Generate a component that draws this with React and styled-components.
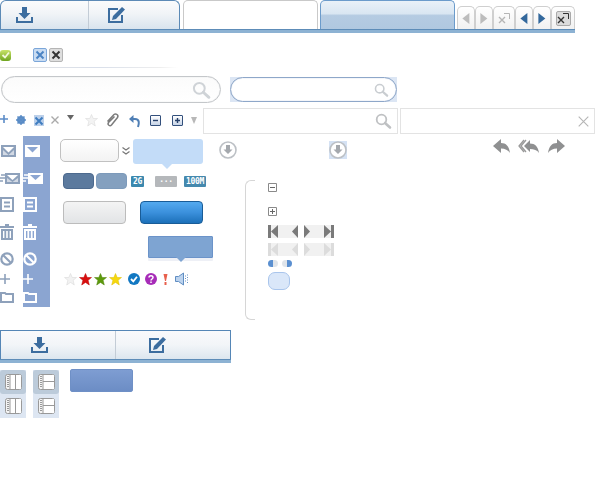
import React from "react";
import styled, { createGlobalStyle } from "styled-components";

const Global = createGlobalStyle`
  html, body { margin: 0; padding: 0; background: #fff; }
  body { font-family: "Liberation Sans", Arial, sans-serif; }
`;

const Page = styled.div`width: 600px; height: 500px; overflow: hidden; display: flex; flex-direction: column;`;
const Glyph = styled.svg`display: block; flex: none; overflow: visible; margin-left: ${p => p.$ml || 0}px; margin-top: ${p => p.$mt || 0}px;`;

const TabBar = styled.div`
  width: ${p => p.$w}px; height: 33px; display: flex; align-items: flex-start; flex: none; box-sizing: border-box;
  border-bottom: 3px solid #8db2d3; position: relative;
  box-shadow: inset 0 -1px 0 #5d8cb8;
`;
const IconTab = styled.div`
  width: 180px; height: 29px; box-sizing: border-box; display: flex; flex: none;
  border: 1px solid #5c8ab6; border-bottom: 0; border-radius: 6px 6px 0 0;
  background: linear-gradient(#fafbfc, #f1f4f7 45%, #d9e4ee);
`;
const PlainTab = styled.div`
  width: 135px; height: 29px; box-sizing: border-box; flex: none; margin-left: 3px;
  border: 1px solid #c9c9c9; border-bottom: 0; border-radius: 5px 5px 0 0; background: #fff;
`;
const ActiveTab = styled.div`
  width: 135px; height: 29px; box-sizing: border-box; flex: none; margin-left: 2px;
  border: 1px solid #6b9bcb; border-bottom: 0; border-radius: 5px 5px 0 0;
  background: linear-gradient(#e9f1f8, #d9e6f2 45%, #b5cbe2 52%, #b0c8e0 100%);
`;
const TabCell = styled.div`
  flex: ${p => p.$w ? `0 0 ${p.$w}px` : 1}; display: flex; align-items: center; box-sizing: border-box;
  padding-left: ${p => p.$pl}px; padding-bottom: 1px;
  border-right: ${p => p.$div ? "1px solid #c3ccd6" : 0};
`;
const NavGroup = styled.div`display: flex; margin-left: 2px; margin-top: 6px;`;
const NavBtn = styled.div`
  width: ${p => p.$w}px; height: 23px; box-sizing: border-box; display: flex; align-items: center; justify-content: center;
  border: 1px solid #cfcfcf; border-bottom: 0; border-radius: 5px 5px 0 0; background: linear-gradient(#fff, #f1f1f1);
`;
const BoxedClose = styled.div`width: 15px; height: 15px; background: #dcdcdc; border: 1px solid #aaa; box-sizing: border-box; border-radius: 2px; display: flex; align-items: center; justify-content: center;`;

const StatusRow = styled.div`display: flex; align-items: center; height: 15px; margin-top: 14px; flex: none;`;
const CloseChip = styled.div`
  width: 14px; height: 14px; box-sizing: border-box; border-radius: 2px; margin-left: ${p => p.$ml}px;
  display: flex; align-items: center; justify-content: center;
  background: ${p => p.$on ? "#c9dcf2" : "#dedede"}; border: 1px solid ${p => p.$on ? "#7ba6d9" : "#b5b5b5"};
`;
const FadeLine = styled.div`width: 178px; height: 1px; margin-top: 5px; flex: none; background: linear-gradient(90deg, #e2e2e2, #d9dfea 55%, #eee 90%, #fff);`;

const SearchRow = styled.div`display: flex; align-items: center; margin-top: 8px; height: 27px; flex: none;`;
const SearchPill = styled.div`
  width: 220px; height: 27px; margin-left: 1px; box-sizing: border-box; border: 1px solid #c4c7ca; border-radius: 14px;
  box-shadow: inset 0 0 1px #c4c7ca;
  display: flex; align-items: center; justify-content: flex-end; padding-right: 10px; background: linear-gradient(#fbfbfb, #fff);
`;
const SearchTile = styled.div`width: 167px; height: 25px; margin-left: 9px; background: #dce6f4;`;
const SearchInner = styled.div`
  width: 100%; height: 100%; box-sizing: border-box; border: 1px solid #8ea7c9; border-radius: 13px; background: #fff;
  box-shadow: inset 0 0 1px #8ea7c9;
  display: flex; align-items: center; justify-content: flex-end; padding-right: 8px;
`;

const ToolRow = styled.div`display: flex; margin-top: 5px; height: 26px; flex: none;`;
const ToolIcons = styled.div`display: flex; align-items: flex-start; width: 203px; flex: none; padding-top: 7px; box-sizing: border-box;`;
const FieldBox = styled.div`
  width: ${p => p.$w}px; height: 26px; box-sizing: border-box; border: 1px solid #e3e3e3; margin-left: ${p => p.$ml || 0}px;
  display: flex; align-items: center; justify-content: flex-end; padding-right: ${p => p.$pr}px;
`;
const XTile = styled.div`width: 10px; height: 11px; background: #bcd0ea; margin-left: 8px; display: flex; align-items: center; justify-content: center;`;
const MiniBox = styled.div`
  width: 11px; height: 11px; box-sizing: border-box; margin-left: ${p => p.$ml}px; border: 1px solid #33507c; border-radius: 1px;
  background: linear-gradient(#fff, #c6d3e6); display: flex; align-items: center; justify-content: center;
`;

const Main = styled.div`display: flex; margin-top: 2px; height: 184px; flex: none;`;
const GlyphColumns = styled.div`display: flex; width: 50px; height: 171px; flex: none;`;
const GlyphCol = styled.div`width: ${p => p.$w}px; flex: none; background: ${p => p.$bg || "transparent"}; display: flex; flex-direction: column;`;
const MiddleArea = styled.div`flex: 1; display: flex; flex-direction: column; padding-left: 10px;`;
const TopStrip = styled.div`display: flex; align-items: flex-start; height: 37px; box-sizing: border-box; padding-top: 3px; flex: none;`;
const WhiteField = styled.div`
  width: 59px; height: 23px; box-sizing: border-box; border: 1px solid #c1c1c1; border-radius: 5px; background: linear-gradient(#fff, #f3f3f3);
`;
const Bubble = styled.div`
  width: ${p => p.$w}px; height: ${p => p.$h}px; box-sizing: border-box; margin-left: ${p => p.$ml}px; position: relative; flex: none;
  background: ${p => p.$bg}; border: ${p => p.$line ? `1px solid ${p.$line}` : 0}; border-radius: ${p => p.$r}px;
  box-shadow: ${p => p.$under ? `0 3px 0 ${p.$under}` : "none"};
  &::after {
    content: ""; position: absolute; left: ${p => p.$tip}px; bottom: -5px;
    border: 5px solid transparent; border-bottom: 0; border-top-color: ${p => p.$bg};
  }
`;
const HalfTile = styled.div`width: 18px; height: 18px; margin-left: ${p => p.$ml}px; margin-top: 2px; background: ${p => p.$bg || "transparent"}; flex: none;`;
const Lower = styled.div`display: flex; flex: 1;`;
const WidgetsCol = styled.div`width: 185px; flex: none; display: flex; flex-direction: column; padding-left: 3px; box-sizing: border-box;`;
const MiniBtnRow = styled.div`display: flex; align-items: center; height: 16px; flex: none;`;
const SlateBtn = styled.div`
  width: 31px; height: 16px; box-sizing: border-box; margin-left: ${p => p.$ml || 0}px; border-radius: 4px;
  background: ${p => p.$dark ? "#5c7a9e" : "#84a0bf"}; border: 1px solid ${p => p.$dark ? "#4d6a8e" : "#7d9aba"};
`;
const Badge = styled.div`
  width: ${p => p.$w}px; height: 11px; margin-left: ${p => p.$ml}px; border-radius: 1px; background: ${p => p.$bg};
  color: #fff; font: bold 8px/11px "DejaVu Sans Mono", monospace; text-align: center; overflow: hidden; letter-spacing: -0.3px; flex: none;
`;
const LargeRow = styled.div`display: flex; margin-top: 12px; height: 23px; flex: none;`;
const GrayBtn = styled.div`width: 63px; height: 23px; box-sizing: border-box; border: 1px solid #bcbcbc; border-radius: 4px; background: linear-gradient(#f4f4f4, #e2e4e6);`;
const BlueBtn = styled.div`width: 63px; height: 23px; box-sizing: border-box; margin-left: 14px; border: 1px solid #195c97; border-radius: 4px; background: linear-gradient(#54aaef, #3b90dc 50%, #1c70b9);`;
const BubbleRow = styled.div`display: flex; margin-top: 12px; height: 26px; flex: none;`;
const StarRow = styled.div`display: flex; align-items: center; height: 16px; margin-top: 9px; flex: none; padding-left: 1px;`;

const Bracket = styled.div`
  width: 10px; height: 140px; box-sizing: border-box; margin-top: 7px; flex: none;
  border: 1px solid #d6d6d6; border-right: 0; border-radius: 6px 0 0 6px;
`;
const TreeCol = styled.div`display: flex; flex-direction: column; margin-left: 13px; padding-top: 10px;`;
const PagerRow = styled.div`display: flex; gap: 6px; margin-top: ${p => p.$mt}px;`;
const Pager = styled.div`width: 30px; height: 13px; background: #f1f1f1; display: flex; align-items: center; justify-content: space-between;`;
const DotRow = styled.div`display: flex; gap: 4px; margin-top: 4px;`;
const Dot = styled.div`width: 10px; height: 7px; border-radius: 4px; background: linear-gradient(${p => p.$flip ? "270deg" : "90deg"}, #5a8fd0 50%, #dfe4ea 50%);`;
const Blob = styled.div`width: 22px; height: 18px; margin-top: 5px; box-sizing: border-box; border: 1px solid #a9c5ec; border-radius: 7px; background: #dae7f9;`;

const WideBar = styled(TabBar)`margin-top: 10px;`;
const FlatTabs = styled.div`
  width: 231px; height: 29px; box-sizing: border-box; display: flex; border: 1px solid #5586b6; border-bottom: 0;
  background: linear-gradient(#f9fafc, #f2f5f8 50%, #dce6ef);
`;
const Bottom = styled.div`display: flex; align-items: flex-start; margin-top: 7px;`;
const LayoutTile = styled.div`width: 26px; height: 48px; margin-left: ${p => p.$ml || 0}px; background: #dde6f2; flex: none; display: flex; flex-direction: column;`;
const LayoutCell = styled.div`
  height: 24px; display: flex; align-items: center; justify-content: center; border-radius: 3px;
  background: ${p => p.$on ? "#bccbda" : "transparent"};
`;
const FlatBlue = styled.div`width: 63px; height: 23px; box-sizing: border-box; margin-left: 11px; margin-top: -1px; border: 1px solid #6f90c6; border-radius: 2px; background: linear-gradient(#7e9dd2, #6c8dc5);`;

const Download = ({ c = "#3c6d9f" }) => (
  <Glyph width="17" height="16" viewBox="0 0 17 16">
    <path fill={c} d="M6 0h5v6h3.500L8.500 12 2.500 6H6zM0 10h2v4h13v-4h2v6H0z" />
  </Glyph>
);
const Edit = () => (
  <Glyph width="17" height="16" viewBox="0 0 17 16">
    <path fill="none" stroke="#3c6d9f" strokeWidth="2" d="M10 2H1v13h13V8" />
    <path fill="#3c6d9f" d="M14 0l3 2.500L8 12l-4 1 1-4z" />
  </Glyph>
);
const Lens = ({ s = 16, c = "#c9cdd1", ml }) => (
  <Glyph $ml={ml} width={s} height={s} viewBox="0 0 16 16">
    <circle cx="6.500" cy="6.500" r="4.800" fill="none" stroke={c} strokeWidth="1.800" />
    <path d="M10 10l5 4.500" stroke={c} strokeWidth="2.600" strokeLinecap="round" />
  </Glyph>
);
const Cross = ({ s = 8, c = "#2f6cb0", w = 2, ml, mt }) => (
  <Glyph $ml={ml} $mt={mt} width={s} height={s} viewBox="0 0 8 8">
    <path d="M0.500 0.500l7 7M7.500 0.500l-7 7" stroke={c} strokeWidth={w} />
  </Glyph>
);
const Tri = ({ d, c, s = 11 }) => (
  <Glyph width={s * 0.7} height={s} viewBox="0 0 7 11">
    <path fill={c} d={d === "l" ? "M7 0v11L0 5.500z" : "M0 0v11l7-5.500z"} />
  </Glyph>
);
const CloseSq = ({ c }) => (
  <Glyph width="13" height="13" viewBox="0 0 13 13">
    <path d="M1 5l6 6M7 5l-6 6" stroke={c} strokeWidth="1.400" />
    <path d="M6 1.500h5.500V7" fill="none" stroke={c} strokeWidth="1" />
  </Glyph>
);
const Star = ({ c, line, s = 13, ml, mt }) => (
  <Glyph $ml={ml} $mt={mt} width={s} height={s} viewBox="0 0 13 13">
    <path fill={c} stroke={line} strokeWidth="0.500" d="M6.500 0.500l1.700 4h4.300l-3.400 2.800 1.200 4.700-3.800-2.600-3.800 2.600 1.200-4.700L0.500 4.500h4.300z" />
  </Glyph>
);
const Plus = ({ s = 10, c, w = 2, ml, mt }) => (
  <Glyph $ml={ml} $mt={mt} width={s} height={s} viewBox="0 0 10 10">
    <path d="M5 0v10M0 5h10" stroke={c} strokeWidth={w} />
  </Glyph>
);
const Mail = ({ c, cut, soft = 0, ml, mt }) => (
  <Glyph $ml={ml} $mt={mt} width="15" height="12" viewBox="0 0 15 12">
    <path fill={c} d="M0 0h15v12H0z" />
    <path fill={cut} d="M2 2h11L7.500 7.500z" />
    <path fill={cut} opacity={soft} d="M2 5l5.500 5L13 5v5H2z" />
  </Glyph>
);
const SendMail = ({ c, cut, soft = 0, w, ml, mt }) => (
  <Glyph $ml={ml} $mt={mt} width={w} height="11" viewBox={`${21 - w} 0 ${w} 11`}>
    <path d="M2 2h4M1 5h5M0 8h4" stroke={c} strokeWidth="1.600" />
    <path fill={c} d="M6 0h15v11H6z" />
    <path fill={cut} d="M8 2h11l-5.500 5z" />
    <path fill={cut} opacity={soft} d="M8 5l5.500 4L19 5v4H8z" />
  </Glyph>
);
const Doc = ({ c, ml, mt }) => (
  <Glyph $ml={ml} $mt={mt} width="14" height="15" viewBox="0 0 14 15">
    <path fill="none" stroke={c} strokeWidth="2" d="M1 1h12v13H1z" />
    <path stroke={c} strokeWidth="1.800" d="M4 5.500h6M4 9.500h6" />
  </Glyph>
);
const Trash = ({ c, ml, mt }) => (
  <Glyph $ml={ml} $mt={mt} width="14" height="16" viewBox="0 0 14 16">
    <path fill={c} d="M0 2h5V0h4v2h5v2H0z" />
    <path fill={c} d="M1 5h12v11H1zM3 7v7h1.400V7zm3.200 0v7h1.600V7zm3.400 0v7H11V7z" fillRule="evenodd" />
  </Glyph>
);
const Ban = ({ c, ml, mt }) => (
  <Glyph $ml={ml} $mt={mt} width="14" height="14" viewBox="0 0 14 14">
    <circle cx="7" cy="7" r="5.700" fill="none" stroke={c} strokeWidth="2.200" />
    <path d="M3 3l8 8" stroke={c} strokeWidth="2.200" />
  </Glyph>
);
const Folder = ({ c, ml, mt }) => (
  <Glyph $ml={ml} $mt={mt} width="14" height="12" viewBox="0 0 14 12">
    <path fill="none" stroke={c} strokeWidth="2" d="M1 3V2h4l1 1h7v8H1z" />
  </Glyph>
);
const CircleArrow = () => (
  <Glyph width="18" height="18" viewBox="0 0 18 18">
    <circle cx="9" cy="9" r="8" fill="#fff" stroke="#bcc0c5" strokeWidth="1.600" />
    <path fill="#a4a8ad" d="M7 4h4v4.500h2.500L9 13 4.500 8.500H7z" />
  </Glyph>
);
const Reply = ({ ml, flip }) => (
  <Glyph $ml={ml} width="17" height="15" viewBox="0 0 17 15" style={flip ? { transform: "scaleX(-1)" } : undefined}>
    <path fill="#8f9091" d="M8 0v4c5 0 8 3 9 10-2-3-5-4.500-9-4.500V14L0 7z" />
  </Glyph>
);
const ReplyAll = ({ ml }) => (
  <Glyph $ml={ml} width="21" height="15" viewBox="0 0 21 15">
    <path fill="none" stroke="#9a9a9a" strokeWidth="1.300" d="M6 1L1 7l5 6M8 1L3 7l5 6" />
    <path fill="#8f9091" d="M12 1v3.500c5 0 8 3 9 9.500-2-3-5-4-9-4V13L6 7z" />
  </Glyph>
);
const Chevrons = () => (
  <Glyph $ml={3} $mt={8} width="8" height="8" viewBox="0 0 8 8">
    <path d="M0.500 0.500L4 3l3.500-2.500M0.500 4.500L4 7l3.500-2.500" fill="none" stroke="#777" strokeWidth="1.200" />
  </Glyph>
);
const SmallBox = ({ plus, mt }) => (
  <Glyph $mt={mt} width="9" height="9" viewBox="0 0 9 9">
    <path fill="none" stroke="#8a8a8a" d="M.5.5h8v8h-8z" />
    <path stroke="#666" d={plus ? "M2 4.500h5M4.500 2v5" : "M2 4.500h5"} />
  </Glyph>
);
const PagerEnd = ({ right, c }) => (
  <Glyph width="10" height="13" viewBox="0 0 10 13">
    <g transform={right ? "translate(10,0) scale(-1,1)" : undefined}>
      <path fill={c} d="M0 0h3v13H0zM10 0v13L3 6.500z" />
    </g>
  </Glyph>
);
const PagerStep = ({ right, c }) => (
  <Glyph width="6" height="13" viewBox="0 0 6 13">
    <path fill={c} d={right ? "M0 0v13l6-6.500z" : "M6 0v13L0 6.500z"} />
  </Glyph>
);
const PagerPair = ({ c, mt }) => (
  <PagerRow $mt={mt}>
    <Pager><PagerEnd c={c} /><PagerStep c={c} /></Pager>
    <Pager><PagerStep right c={c} /><PagerEnd right c={c} /></Pager>
  </PagerRow>
);
const LayoutIcon = ({ alt }) => (
  <Glyph width="17" height="16" viewBox="0 0 17 16">
    <rect x=".5" y=".5" width="16" height="15" rx="2" fill="#f4f4f4" stroke="#999" />
    <path fill="#fff" d="M5 1h11v14H5z" />
    <path stroke="#999" strokeDasharray="1 1" strokeWidth="2" d="M3 2v12" />
    <path stroke="#999" d={alt ? "M5 1v14M5 7.500h11" : "M5 1v14M10.500 1v14"} />
  </Glyph>
);
const GearIcon = () => (
  <Glyph $ml={8} width="10" height="10" viewBox="0 0 10 10">
    <circle cx="5" cy="5" r="3" fill="none" stroke="#5a8cc6" strokeWidth="2" />
    <path stroke="#5a8cc6" strokeWidth="1.400" d="M5 0v10M0 5h10M1.500 1.500l7 7M8.500 1.500l-7 7" />
  </Glyph>
);

const IconBar = ({ w1, pl1, pl2 }) => (
  <>
    <TabCell $w={w1} $div $pl={pl1}><Download /></TabCell>
    <TabCell $pl={pl2}><Edit /></TabCell>
  </>
);

export default function App() {
  const slate = "#8ea1bb";
  return (
    <Page>
      <Global />
      <TabBar $w={575}>
        <IconTab><IconBar w1={88} pl1={15} pl2={19} /></IconTab>
        <PlainTab />
        <ActiveTab />
        <NavGroup>
          <NavBtn $w={18}><Tri d="l" c="#bcbcbc" /></NavBtn>
          <NavBtn $w={18}><Tri d="r" c="#bcbcbc" /></NavBtn>
          <NavBtn $w={22}><CloseSq c="#b5b5b5" /></NavBtn>
          <NavBtn $w={18}><Tri d="l" c="#33689c" /></NavBtn>
          <NavBtn $w={18}><Tri d="r" c="#33689c" /></NavBtn>
          <NavBtn $w={24}><BoxedClose><CloseSq c="#333" /></BoxedClose></NavBtn>
        </NavGroup>
      </TabBar>

      <StatusRow>
        <Glyph width="11" height="11" viewBox="0 0 11 11" $mt={2}>
          <defs>
            <linearGradient id="okFill" x1="0" y1="0" x2="0" y2="1">
              <stop offset="0" stopColor="#c9e36a" /><stop offset="1" stopColor="#6fa51f" />
            </linearGradient>
          </defs>
          <rect width="11" height="11" rx="3" fill="url(#okFill)" />
          <path d="M2.500 5L5 7.500 9 2.500" stroke="#f3f8dc" strokeWidth="1.800" fill="none" />
        </Glyph>
        <CloseChip $on $ml={22}><Cross c="#4b84c4" /></CloseChip>
        <CloseChip $ml={2}><Cross c="#333" /></CloseChip>
      </StatusRow>
      <FadeLine />

      <SearchRow>
        <SearchPill><Lens s={18} c="#cfd3d7" /></SearchPill>
        <SearchTile>
          <SearchInner><Lens s={14} /></SearchInner>
        </SearchTile>
      </SearchRow>

      <ToolRow>
        <ToolIcons>
          <Plus s={8} c="#5c8cc7" />
          <GearIcon />
          <XTile><Cross c="#3f7dc0" /></XTile>
          <Cross c="#aaa" w={1.4} ml={7} mt={1} />
          <Glyph $ml={8} width="7" height="5" viewBox="0 0 7 5"><path fill="#666" d="M0 0h7L3.500 5z" /></Glyph>
          <Star c="#f3f3f3" line="#d5d5d5" ml={11} mt={-1} />
          <Glyph $ml={8} $mt={-2} width="14" height="14" viewBox="0 0 14 14">
            <path fill="none" stroke="#7c7c7c" strokeWidth="1.500" d="M1.500 8.500l6.500-7c1.800-1.500 5 .5 3.500 3L5.500 12c-1.500 1.500-4.500 0-3-2.500L8.500 3.500" />
          </Glyph>
          <Glyph $ml={9} width="11" height="13" viewBox="0 0 11 13">
            <path fill="none" stroke="#4f7fb5" strokeWidth="2" d="M3 4h3c5 0 4 5 3 8" />
            <path fill="#4f7fb5" d="M4.500 0v8L0 4z" />
          </Glyph>
          <MiniBox $ml={10}><Glyph width="7" height="7" viewBox="0 0 7 7"><path stroke="#26406a" strokeWidth="1.400" d="M1 3.500h5" /></Glyph></MiniBox>
          <MiniBox $ml={11}><Glyph width="7" height="7" viewBox="0 0 7 7"><path stroke="#26406a" strokeWidth="1.400" d="M1 3.500h5M3.500 1v5" /></Glyph></MiniBox>
          <Glyph $ml={8} $mt={2} width="6" height="7" viewBox="0 0 6 7"><path fill="#b8b8b8" d="M0 0h6L3 7z" /></Glyph>
        </ToolIcons>
        <FieldBox $w={195} $pr={6}><Lens s={16} c="#bfc1c3" /></FieldBox>
        <FieldBox $w={195} $ml={2} $pr={5}><Cross s={11} c="#b5b5b5" w={0.8} /></FieldBox>
      </ToolRow>

      <Main>
        <GlyphColumns>
          <GlyphCol $w={23}>
            <Mail c={slate} cut="#fff" soft={0.6} ml={1} mt={9} />
            <SendMail c={slate} cut="#fff" soft={0.6} w={20} mt={16} />
            <Doc c={slate} mt={13} />
            <Trash c={slate} mt={12} />
            <Ban c={slate} mt={12} />
            <Plus c={slate} w={1.6} mt={8} />
            <Folder c={slate} mt={7} />
          </GlyphCol>
          <GlyphCol $w={27} $bg="#8ba5d1">
            <Mail c="#fff" cut="#8ba5d1" ml={2} mt={9} />
            <SendMail c="#fff" cut="#8ba5d1" w={21} ml={-1} mt={16} />
            <Doc c="#fff" mt={13} />
            <Trash c="#fff" mt={12} />
            <Ban c="#fff" mt={12} />
            <Plus c="#fff" w={1.6} mt={8} />
            <Folder c="#fff" mt={7} />
          </GlyphCol>
        </GlyphColumns>
        <MiddleArea>
          <TopStrip>
            <WhiteField />
            <Chevrons />
            <Bubble $w={70} $h={25} $ml={3} $bg="#c3dcf8" $r={3} $tip={29} />
            <HalfTile $ml={16}><CircleArrow /></HalfTile>
            <HalfTile $ml={92} $bg="#d5e2f4"><CircleArrow /></HalfTile>
            <Reply ml={146} />
            <ReplyAll ml={8} />
            <Reply ml={9} flip />
          </TopStrip>
          <Lower>
            <WidgetsCol>
              <MiniBtnRow>
                <SlateBtn $dark />
                <SlateBtn $ml={2} />
                <Badge $w={13} $bg="#3b88ae" $ml={4}>2G</Badge>
                <Badge $w={22} $bg="#b5b8bb" $ml={11}>···</Badge>
                <Badge $w={22} $bg="#4589ae" $ml={7}>100M</Badge>
              </MiniBtnRow>
              <LargeRow><GrayBtn /><BlueBtn /></LargeRow>
              <BubbleRow>
                <Bubble $w={65} $h={22} $ml={85} $bg="#7ea4d2" $line="#6b93c9" $r={1} $tip={27} $under="#eef0f6" />
              </BubbleRow>
              <StarRow>
                <Star c="#f2f2f2" line="#d5d5d5" />
                <Star c="#d90f0f" line="#b80000" ml={2} />
                <Star c="#5d9a0c" line="#4c8208" ml={2} />
                <Star c="#f6d80e" line="#dcbc00" ml={2} />
                <Glyph $ml={6} width="12" height="12" viewBox="0 0 12 12">
                  <circle cx="6" cy="6" r="6" fill="#1278c2" /><path d="M3 6l2.300 2.300L9 3.800" fill="none" stroke="#fff" strokeWidth="1.800" />
                </Glyph>
                <Glyph $ml={5} width="12" height="12" viewBox="0 0 12 12">
                  <circle cx="6" cy="6" r="6" fill="#a72cb8" /><path d="M4 4.500c0-2.500 4-2.500 4 0 0 1.500-2 1.500-2 3M6 8.500v1.500" fill="none" stroke="#fff" strokeWidth="1.500" />
                </Glyph>
                <Glyph $ml={6} width="5" height="11" viewBox="0 0 5 11">
                  <path fill="#e8604c" d="M0.500 0h4L3 7H2zM1.500 8h2v3h-2z" />
                </Glyph>
                <Glyph $ml={7} width="14" height="14" viewBox="0 0 14 14">
                  <path fill="#bcd3ee" stroke="#5f8dc2" d="M.5 4.500h3L8.500 1v12l-5-3.500h-3z" />
                  <path stroke="#6b94c6" strokeDasharray="1 1.500" d="M10.500 3.500v7M12.500 2.500v9" />
                </Glyph>
              </StarRow>
            </WidgetsCol>
            <Bracket />
            <TreeCol>
              <SmallBox />
              <SmallBox plus mt={15} />
              <PagerPair c="#7a7a7a" mt={9} />
              <PagerPair c="#dcdcdc" mt={5} />
              <DotRow><Dot /><Dot $flip /></DotRow>
              <Blob />
            </TreeCol>
          </Lower>
        </MiddleArea>
      </Main>

      <WideBar $w={231}>
        <FlatTabs><IconBar w1={115} pl1={30} pl2={33} /></FlatTabs>
      </WideBar>

      <Bottom>
        <LayoutTile>
          <LayoutCell $on><LayoutIcon /></LayoutCell>
          <LayoutCell><LayoutIcon /></LayoutCell>
        </LayoutTile>
        <LayoutTile $ml={7}>
          <LayoutCell $on><LayoutIcon alt /></LayoutCell>
          <LayoutCell><LayoutIcon alt /></LayoutCell>
        </LayoutTile>
        <FlatBlue />
      </Bottom>
    </Page>
  );
}
